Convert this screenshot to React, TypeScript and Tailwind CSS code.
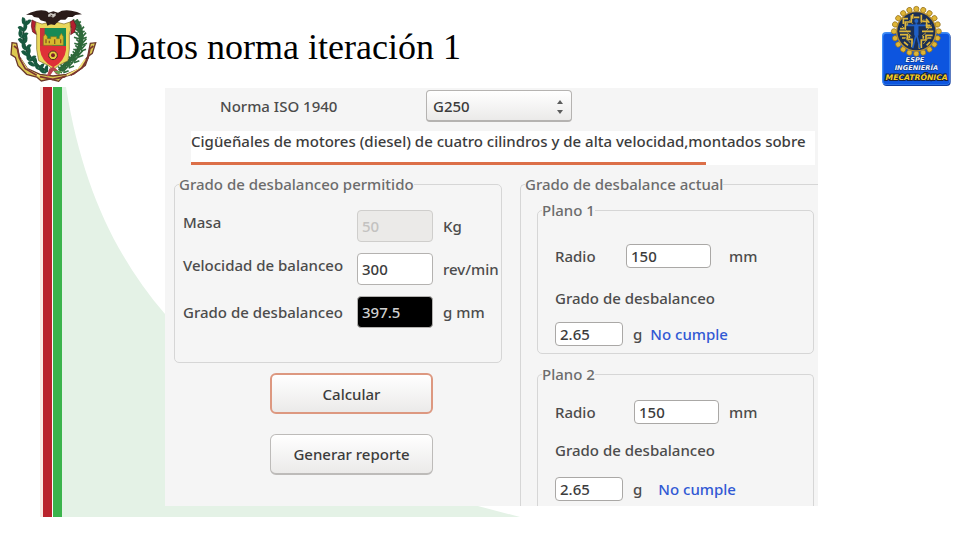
import React from 'react';

const massFields = [
  { id: 'masa', label: 'Masa', value: '50', unit: 'Kg', labelClass: 'pb-2', inputClass: 'border-[#cfcecc] bg-[#ebeae8] text-[#c3c2c0]', disabled: true },
  { id: 'velocidad', label: 'Velocidad de balanceo', value: '300', unit: 'rev/min', labelClass: 'pb-2', inputClass: 'border-[#b4b2b0] bg-white text-[#3c3c3c]', disabled: false },
  { id: 'grado', label: 'Grado de desbalanceo', value: '397.5', unit: 'g mm', labelClass: '', inputClass: 'border-[#b4b2b0] bg-black text-[#d0d0d0]', disabled: false }
];

const teeth = Array.from({ length: 20 }, (_, i) => i * 18);
const leaves = [
  [76, 66, 20], [70, 84, -30], [66, 104, 25], [70, 122, -20], [76, 140, 20], [80, 158, -25],
  [90, 174, 20], [100, 190, -30], [116, 200, 10], [132, 211, -20]
];
const fronds = [
  [228, 66], [238, 82], [244, 100], [245, 118], [242, 136], [234, 154], [222, 170], [206, 186], [190, 200]
];

function Crest() {
  return (
    <svg viewBox="27 27 264 222" className="h-[74px] w-[88px] shrink-0" role="img" aria-label="Escudo">
      {/* ribbon */}
      <path d="M36 128l14 2 8 40 24 36 38 17 39 5 40-5 36-15 28-38 8-40 16-2-10 32-11 8-10 28-34 26-34 9-12 13-26-7-26 6-14-12-30-8-26-26-8-25-13-8z" fill="#dcc850" stroke="#6b3a2c" strokeWidth="4" />
      <path d="M62 178l20 32 36 18M256 178l-20 30-36 18" fill="none" stroke="#f3e27a" strokeWidth="5" />
      <path d="M42 138l10 8 6 28 18 32 34 20M280 138l-10 8-6 28-18 30-34 22M120 230l38 8 38-8" fill="none" stroke="#7c3430" strokeWidth="5" />
      {/* laurel */}
      <path d="M80 62q-22 50 2 94t62 58" fill="none" stroke="#1d4a35" strokeWidth="6" />
      {leaves.map(([x, y, r]) => (
        <g key={y} transform={`translate(${x} ${y}) rotate(${r})`} fill="#17593f">
          <path d="M-14-10Q0-16 2 10-12 10-14-10z" />
          <path d="M16-12Q2-14 0 10 14 10 16-12z" />
        </g>
      ))}
      {/* palm */}
      <path d="M228 60q32 50 0 102l-50 50" fill="none" stroke="#2c5c36" strokeWidth="12" />
      {fronds.map(([x, y]) => (
        <path key={y} d={`M${x} ${y + 14}l-16-14M${x} ${y + 14}l-8-22M${x} ${y + 14}l4-22M${x} ${y + 14}l14-16M${x - 4} ${y + 18}l-18-6M${x} ${y + 18}l16-6`} stroke="#2f6a3b" strokeWidth="5" />
      ))}
      {/* shield */}
      <path d="M96 60l12 6-4 18 6 20-12-8-4-18zM220 60l-10 6 4 20-2 18 12-8 4-20z" fill="#b3202f" stroke="#5b1a1c" strokeWidth="2" />
      <path d="M108 66l18 6 32-8 34 8 18-6 2 24-4 12v46l-4 34-28 14-16 14-16-14-28-14-6-34v-46l-4-14z" fill="#e9d75b" stroke="#7d6a22" strokeWidth="2" />
      <path d="M120 84h78v66q-4 34-38 52-36-18-40-52z" fill="#df3038" />
      <path d="M120 84h78v54h-40z" fill="#178a55" />
      <path d="M120 84h14v54h-14z" fill="#c8323a" />
      <path d="M130 136v-26l6-8 6 8v6h10v-6h18v6h8v-6l6-10 6 10v26z" fill="#d6ba2d" stroke="#7f7a22" strokeWidth="2" />
      <path d="M138 118v12M148 122v8M164 118v14M182 118v12" stroke="#8d5a20" strokeWidth="4" />
      <circle cx="159" cy="166" r="13" fill="#e6cf3e" stroke="#4f2b1c" strokeWidth="3" />
      <circle cx="159" cy="166" r="6" fill="#7b2029" />
      {/* condor */}
      <path d="M78 44q12-8 32-12 26-4 36 6l14-4 14 4q14-10 40-6 18 2 32 11l-20 2-8 6-14 0-8 8-14 0-10 8-8 8-12-2-10 4-4-12-16-4-6-8-14-2-6-6z" fill="#2b1c1a" />
      <path d="M144 44l8-5 8 3 7-3v8l-8 6-6-4-8 2z" fill="#c9c5bf" />
      <path d="M152 46l5 2M146 68l6 4M166 68l6-2" stroke="#3a2523" strokeWidth="3" />
      {/* knot */}
      <path d="M148 206l12-6 10 8 10 18-12-4-8-10-8 12-12 6z" fill="#b8434a" />
      <path d="M160 212l26 2-10 10z" fill="#6ba04a" />
    </svg>
  );
}

function MecatronicaLogo() {
  return (
    <svg viewBox="30 15 216 246" className="h-[82px] w-[72px] shrink-0" role="img" aria-label="ESPE Ingeniería Mecatrónica">
      <rect x="38" y="100" width="204" height="158" rx="12" fill="#0b3aa0" />
      <rect x="36" y="96" width="204" height="158" rx="12" fill="#3f8cf5" />
      <rect x="40" y="101" width="198" height="152" rx="10" fill="#0d55df" />
      {teeth.map((deg) => (
        <circle key={deg} cx="139" cy="27" r="8" fill="#dfb535" stroke="#8c6a1c" strokeWidth="2" transform={`rotate(${deg} 139 94)`} />
      ))}
      <circle cx="139" cy="94" r="61" fill="#b98f2e" />
      <circle cx="139" cy="94" r="57" fill="#1b2f55" />
      {/* circuit traces */}
      <path d="M90 86h16V66h18V46M90 104h22v14h14v24M100 72V56h14M186 82h-16V64h-16V44M188 106h-20v14h-14v24M178 68l-10-12M102 126l12 10M170 136l10-10M88 94h34M156 94h34M112 78v-8M166 76h14M118 106v8M160 108v8M128 42v14M148 146v-14M96 114h10M172 114h12M132 52h16" fill="none" stroke="#e0b83c" strokeWidth="5" />
      <path d="M96 78l14 14M184 74l-14 18M106 112l16 18M176 112l-16 20M118 60l10 12M162 58l-10 12M112 98l12 10M168 98l-12 10" fill="none" stroke="#b89a3a" strokeWidth="3" />
      {/* figure */}
      <circle cx="139" cy="63" r="6" fill="#2565c4" />
      <path d="M112 76h54M139 70v34M139 100l-11 44M139 100l11 44M135 76v28h8V76" fill="none" stroke="#2060c6" strokeWidth="5" />
      <g fontFamily="DejaVu Sans" fontStyle="italic" fontWeight="bold" textAnchor="middle">
        <text x="135" y="185" fontSize="20" fill="#eef4ff" stroke="#0b3385" strokeWidth="3" paintOrder="stroke">ESPE</text>
        <text x="139" y="211" fontSize="20" fill="#eef4ff" stroke="#0b3385" strokeWidth="3" paintOrder="stroke">INGENIERÍA</text>
        <text x="140" y="239" fontSize="23" fill="#f8cf20" stroke="#16213f" strokeWidth="6" paintOrder="stroke">MECATRÓNICA</text>
      </g>
    </svg>
  );
}

type PlanoProps = {
  id: string;
  title: string;
  className: string;
  radioRow: string;
  radioLabel: string;
  unitGap: string;
  gradoLabel: string;
  resultGap: string;
};

function Plano({ id, title, className, radioRow, radioLabel, unitGap, gradoLabel, resultGap }: PlanoProps) {
  return (
    <fieldset className={`border-[#d6d6d6] pl-1 ${className}`}>
      <legend className="leading-5 text-[#6c6c6c]">{title}</legend>
      <div className="pl-[13px]">
        <div className={`flex items-center ${radioRow}`}>
          <label htmlFor={`${id}-radio`} className={radioLabel}>Radio</label>
          <input id={`${id}-radio`} defaultValue="150" className="h-6 w-[85px] rounded border border-[#aaa8a6] bg-white px-1 text-[#3c3c3c]" />
          <span className={unitGap}>mm</span>
        </div>
        <label htmlFor={`${id}-grado`} className={`block leading-5 ${gradoLabel}`}>Grado de desbalanceo</label>
        <div className="flex items-center">
          <input id={`${id}-grado`} defaultValue="2.65" className="h-6 w-[68px] rounded border border-[#aaa8a6] bg-white px-1 text-[#3c3c3c]" />
          <span className="ml-[10px]">g</span>
          <span className={`text-[#3159d4] ${resultGap}`}>No cumple</span>
        </div>
      </div>
    </fieldset>
  );
}

export default function App() {
  return (
    <div className="min-h-screen bg-white">
      <header className="flex h-[87px] items-start pt-[5px] pr-2 pl-[9px]">
        <div className="pt-1">
          <Crest />
        </div>
        <h1 className="flex-1 pt-[19px] pl-[17px] font-['Liberation_Serif',serif] text-4xl leading-[46px] text-black">Datos norma iteración 1</h1>
        <MecatronicaLogo />
      </header>

      <main className="relative flex pr-[142px] pl-10">
        {/* Pale green swoosh behind the form */}
        <svg viewBox="0 0 480 430" className="absolute top-0 left-10 h-[430px] w-[480px]" aria-hidden="true">
          <path d="M22 0H26C42 100 76 170 125 227C205 320 330 392 434 418L480 430H22z" fill="#e4f2e6" />
        </svg>
        <div className="relative flex gap-px border-l-3 border-[#fae9e4]">
          <div className="w-[9px] bg-[#b9232c]" />
          <div className="w-[9px] bg-[#3bb44c]" />
        </div>

        <form className="relative mt-px mb-[11px] ml-[103px] flex-1 bg-[#f5f5f5] font-['Noto_Sans',sans-serif] text-[15px] leading-5 font-medium text-[#4c4c4c]" onSubmit={(e) => e.preventDefault()}>
          <div className="flex items-center pt-0.5 pl-[55px]">
            <label htmlFor="norma" className="w-[206px]">Norma ISO 1940</label>
            <div className="relative w-[146px]">
              <select id="norma" className="h-8 w-full appearance-none rounded border border-b-2 border-[#b5b3b1] bg-linear-to-b from-white to-[#ebeae9] px-1.5 text-[#3c3c3c]">
                <option>G250</option>
              </select>
              <svg viewBox="0 0 8 14" className="pointer-events-none absolute top-[10px] right-2 h-[14px] w-2" fill="#5c5c5c" aria-hidden="true">
                <path d="M4 0l3 4H1zM4 14l3-4H1z" />
              </svg>
            </div>
          </div>

          <div className="mt-[9px] mr-[3px] ml-[26px] bg-white">
            <p className="h-[31px] leading-5 whitespace-nowrap text-[#3c3c3c]">Cigüeñales de motores (diesel) de cuatro cilindros y de alta velocidad,montados sobre</p>
            <div className="h-[3px] w-[515px] bg-[#dc6f48]" />
          </div>

          <div className="flex gap-[18px] pt-[9px] pl-[9px]">
            <div className="w-[328px]">
              <fieldset className="rounded-[5px] border border-[#d6d6d6] pb-[34px] pl-1">
                <legend className="leading-5 text-[#6c6c6c]">Grado de desbalanceo permitido</legend>
                <div className="space-y-[11px] pt-4 pl-1">
                  {massFields.map((f) => (
                    <div key={f.id} className="flex items-center">
                      <label htmlFor={f.id} className={`w-[174px] ${f.labelClass}`}>{f.label}</label>
                      <input id={f.id} defaultValue={f.value} disabled={f.disabled} className={`h-8 w-[76px] rounded border px-1 ${f.inputClass}`} />
                      <span className="pl-[10px] whitespace-nowrap">{f.unit}</span>
                    </div>
                  ))}
                </div>
              </fieldset>
              <div className="flex w-[259px] flex-col items-end gap-5 pt-[10px]">
                <button type="submit" className="h-[41px] w-[163px] rounded-md border-2 border-[#dd9880] bg-linear-to-b from-white to-[#ebeae9] text-[#3c3c3c]">Calcular</button>
                <button type="button" className="h-[41px] w-[163px] rounded-md border border-b-2 border-[#bdbbb9] bg-linear-to-b from-white to-[#ebeae9] text-[#3c3c3c]">Generar reporte</button>
              </div>
            </div>

            <fieldset className="flex-1 rounded-tl-[5px] border-t border-l border-[#d6d6d6] pr-1 pl-1">
              <legend className="leading-5 text-[#6c6c6c]">Grado de desbalance actual</legend>
              <div className="space-y-[10px] pt-[6px] pl-3">
                <Plano
                  id="plano1"
                  title="Plano 1"
                  className="rounded-[5px] border pb-[7px]"
                  radioRow="pt-6"
                  radioLabel="w-[71px]"
                  unitGap="ml-[18px]"
                  gradoLabel="pt-5 pb-[14px]"
                  resultGap="ml-2"
                />
                <Plano
                  id="plano2"
                  title="Plano 2"
                  className="rounded-t-[5px] border border-b-0 pb-[5px]"
                  radioRow="pt-4"
                  radioLabel="w-[79px]"
                  unitGap="ml-[10px]"
                  gradoLabel="pt-4 pb-[17px]"
                  resultGap="ml-4"
                />
              </div>
            </fieldset>
          </div>
        </form>
      </main>
    </div>
  );
}
